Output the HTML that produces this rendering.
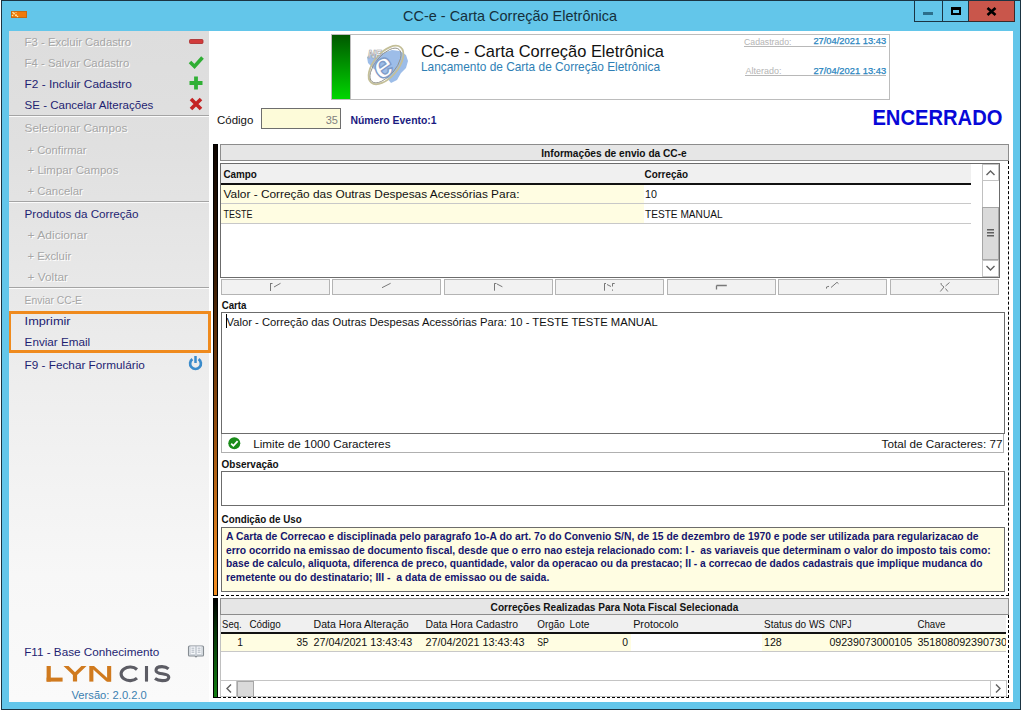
<!DOCTYPE html>
<html><head><meta charset="utf-8">
<style>
*{box-sizing:border-box;margin:0;padding:0}
html,body{width:1022px;height:710px;overflow:hidden;background:#fff;font-family:"Liberation Sans",sans-serif;position:relative}
.a{position:absolute}
.sep{position:absolute;left:9px;width:200px;height:2px;border-top:1px solid #a4a4a4;border-bottom:1px solid #fbfbfb}
.btn{position:absolute;top:279px;height:16px;width:109px;border:1px solid #b4b4b4;background:#f2f2f2}
.box{position:absolute;border:1px solid #6c6c6c;background:#fff}
</style></head><body>
<!-- window frame -->
<div class="a" style="left:1px;top:0;width:1020px;height:710px;background:#63c6ea;border:1px solid #1b3442"></div>
<!-- orange icon -->
<div class="a" style="left:11px;top:11px;width:16px;height:7px;background:#f07a0a;border:1px solid #c86a10"></div>
<svg class="a" style="left:11px;top:11px" width="9" height="7"><g fill="#ffe9a8"><circle cx="2" cy="1.5" r="0.8"/><circle cx="3" cy="2.5" r="0.9"/><circle cx="5" cy="4.2" r="1"/><circle cx="1.5" cy="4.5" r="0.8"/><circle cx="6.5" cy="5.5" r="0.8"/><circle cx="5" cy="1.5" r="0.6"/></g></svg>
<!-- window buttons -->
<div class="a" style="left:914px;top:1px;width:29px;height:21px;border:1px solid #1b3442;border-top:0;background:#63c6ea"></div>
<div class="a" style="left:923px;top:12px;width:10px;height:3px;background:#2b6f8c"></div>
<div class="a" style="left:943px;top:1px;width:26px;height:21px;border:1px solid #1b3442;border-top:0;border-left:0;background:#63c6ea"></div>
<div class="a" style="left:951px;top:7px;width:10px;height:8px;border:2px solid #000;border-top-width:3px"></div>
<div class="a" style="left:969px;top:1px;width:46px;height:21px;border:1px solid #3a2a2a;border-top:0;border-left:0;background:#c9564b"></div>
<svg class="a" style="left:986px;top:7px" width="11" height="9"><path d="M1.5 1 L9.5 8 M9.5 1 L1.5 8" stroke="#000" stroke-width="2.6"/></svg>

<!-- main white -->
<div class="a" style="left:209px;top:31px;width:804px;height:671px;background:#fff"></div>

<!-- header box -->
<div class="a" style="left:331px;top:34px;width:559px;height:66px;border:1px solid #bcbcbc;background:#fff"></div>
<div class="a" style="left:332px;top:35px;width:19px;height:64px;background:linear-gradient(#005800,#00d600);border-right:1px solid #bcbcbc"></div>
<svg class="a" style="left:360px;top:40px" width="56" height="50" viewBox="0 0 56 50">
  <path d="M7 17 C11 14 17 14 23 13 L32 10 L40 11 L46 15 L48 21 L46 28 L41 33 L37 40 L31 43 L27 38 L22 33 L14 29 L8 23 Z" fill="#9dbde8"/>
  <ellipse cx="26" cy="25" rx="23" ry="12" transform="rotate(-50 26 25)" fill="none" stroke="#c4bf98" stroke-width="1.8"/>
  <ellipse cx="25.5" cy="25.5" rx="21" ry="10" transform="rotate(-50 25.5 25.5)" fill="none" stroke="#909088" stroke-width="0.9"/>
  <g transform="rotate(-35 26 25)"><text x="13" y="35" font-family="Liberation Sans" font-size="34" font-style="italic" font-weight="bold" fill="#fdfdfd" stroke="#7f9cc8" stroke-width="1.4">e</text></g>
  <text x="8" y="17.5" font-family="Liberation Sans" font-size="10" font-style="italic" font-weight="bold" fill="#fff" stroke="#9a9a9a" stroke-width="0.6">NF</text>
</svg>
<div class="a" style="left:744px;top:46px;width:142px;height:1px;background:#b8b8b8"></div>
<div class="a" style="left:745px;top:75px;width:141px;height:1px;background:#b8b8b8"></div>

<!-- codigo -->
<div class="a" style="left:261px;top:108px;width:80px;height:21px;border:1px solid #6e6e6e;background:#fdfbd9"></div>

<!-- left bars -->
<div class="a" style="left:213px;top:144px;width:5px;height:452px;background:linear-gradient(#0c0400,#3a1c04 30%,#9a5210 65%,#f08c22 95%);border:1px solid #000"></div>
<div class="a" style="left:213px;top:598px;width:5px;height:100px;background:linear-gradient(#000,#063006 30%,#128012);border:1px solid #000"></div>

<!-- section 1 header -->
<div class="a" style="left:220px;top:144px;width:789px;height:17px;border:1px solid #8c8c8c;background:#e6e6e6"></div>

<!-- grid 1 -->
<div class="box" style="left:220px;top:163px;width:780px;height:115px"></div>
<div class="a" style="left:221px;top:164px;width:750px;height:21px;background:#f0f0f0;border-bottom:2px solid #111"></div>
<div class="a" style="left:221px;top:185px;width:423px;height:18px;background:#fffde2"></div>
<div class="a" style="left:221px;top:203px;width:750px;height:1px;background:#c8c8c8"></div>
<div class="a" style="left:221px;top:204px;width:423px;height:19px;background:#fffde2"></div>
<div class="a" style="left:221px;top:223px;width:750px;height:1px;background:#c8c8c8"></div>
<!-- vscroll -->
<div class="a" style="left:982px;top:164px;width:17px;height:113px;background:#fff;border-left:1px solid #c0c0c0"></div>
<div class="a" style="left:982px;top:164px;width:17px;height:17px;border:1px solid #c4c4c4;background:#fff"></div>
<div class="a" style="left:982px;top:207px;width:17px;height:53px;border:1px solid #a6a6a6;background:#dadada"></div>
<div class="a" style="left:982px;top:260px;width:17px;height:17px;border:1px solid #c4c4c4;background:#fff"></div>
<svg class="a" style="left:982px;top:164px" width="17" height="113">
 <path d="M4.5 11 L8.5 7 L12.5 11" fill="none" stroke="#606060" stroke-width="1.4"/>
 <path d="M4.5 102 L8.5 106 L12.5 102" fill="none" stroke="#606060" stroke-width="1.4"/>
 <rect x="5" y="65" width="7" height="1.5" fill="#606060"/><rect x="5" y="68" width="7" height="1.5" fill="#606060"/><rect x="5" y="71" width="7" height="1.5" fill="#606060"/>
</svg>
<!-- nav buttons -->
<div class="btn" style="left:221px"></div>
<div class="btn" style="left:332px"></div>
<div class="btn" style="left:444px"></div>
<div class="btn" style="left:555px"></div>
<div class="btn" style="left:667px"></div>
<div class="btn" style="left:778px"></div>
<div class="btn" style="left:890px"></div>
<svg class="a" style="left:221px;top:279px" width="778" height="16" fill="none" stroke="#787878" stroke-width="1">
 <path d="M49.5 4 V12 M49.5 4.5 H51.5 M53 8 L59.5 4.3"/>
 <path d="M161 8.7 L169.6 4.3"/>
 <path d="M273.5 4.3 V11.7 M273.5 4.5 H275.5 M276 5 L281.4 7.8"/>
 <path d="M383.5 4.3 V11.7 M383.5 4.5 H385 M386 5.5 L390 7.5 M391.5 4.3 V7.5 M391.5 4.5 H393.7 M391.5 10.5 V11.7"/>
 <path d="M495.5 6.5 H505.8 M495.5 6.5 V10.5" stroke-width="1.3"/>
 <path d="M605.5 9.6 V8 L608 7.3 M610 8.5 L616 3.3 L617.5 4.7"/>
 <path d="M720 4 Q719 5.5 723 8 L719.3 12.5 M728.5 3.5 L724.5 7 M724.5 9.5 L726.8 12.5"/>
</svg>

<!-- carta -->
<div class="box" style="left:221px;top:312px;width:784px;height:122px"></div>
<div class="a" style="left:226px;top:314px;width:1px;height:14px;background:#000;z-index:6"></div>
<div class="a" style="left:221px;top:434px;width:783px;height:19px;border:1px solid #b0b0b0;border-top:0;background:#fff"></div>
<svg class="a" style="left:228px;top:437px" width="13" height="13"><circle cx="6.3" cy="6.3" r="6" fill="#1a8c1a"/><path d="M3.2 6.6 L5.4 8.8 L9.6 4.2" fill="none" stroke="#fff" stroke-width="1.8"/></svg>

<!-- observacao -->
<div class="box" style="left:221px;top:471px;width:784px;height:35px"></div>
<div class="box" style="left:221px;top:527px;width:784px;height:65px;background:#fffde2"></div>

<!-- dashed focus -->
<div class="a" style="left:221px;top:595px;width:788px;height:0;border-top:1px dashed #000"></div>
<div class="a" style="left:1008px;top:161px;width:0;height:435px;border-left:1px dashed #000"></div>
<div class="a" style="left:1008px;top:615px;width:0;height:83px;border-left:1px dashed #000"></div>
<div class="a" style="left:218px;top:697px;width:791px;height:0;border-top:1px dashed #000"></div>

<!-- section 2 -->
<div class="a" style="left:220px;top:598px;width:789px;height:17px;border:1px solid #8c8c8c;background:#e6e6e6"></div>
<div class="a" style="left:220px;top:615px;width:787px;height:82px;border-left:1px solid #c0c0c0;background:#fff"></div>
<div class="a" style="left:221px;top:615px;width:785px;height:19px;background:#f0f0f0;border-bottom:2px solid #111"></div>
<div class="a" style="left:221px;top:634px;width:410px;height:17px;background:#fffde2"></div>
<div class="a" style="left:762px;top:634px;width:244px;height:17px;background:#fffde2"></div>
<div class="a" style="left:221px;top:651px;width:785px;height:1px;background:#c8c8c8"></div>
<!-- hscroll -->
<div class="a" style="left:220px;top:680px;width:787px;height:17px;border:1px solid #c4c4c4;background:#fff"></div>
<div class="a" style="left:237px;top:681px;width:17px;height:16px;border:1px solid #a6a6a6;background:#dadada"></div>
<div class="a" style="left:236px;top:681px;width:1px;height:16px;background:#c4c4c4"></div>
<div class="a" style="left:990px;top:681px;width:1px;height:16px;background:#c4c4c4"></div>
<svg class="a" style="left:220px;top:680px" width="787" height="17" fill="none" stroke="#606060" stroke-width="1.4">
 <path d="M11 4.5 L7 8.5 L11 12.5"/>
 <path d="M776 4.5 L780 8.5 L776 12.5"/>
</svg>

<!-- left panel -->
<div class="a" style="left:9px;top:31px;width:200px;height:671px;background:linear-gradient(#dddddd,#e0e0e0 17%,#eeeeee 53%,#f7f7f7 81%,#fafafa)"></div>
<div class="sep" style="top:115px"></div>
<div class="sep" style="top:201px"></div>
<div class="sep" style="top:287px"></div>
<div class="a" style="left:9px;top:311px;width:202px;height:42px;border:3px solid #ef8a1d;border-left-width:2px"></div>
<svg class="a" style="left:185px;top:35px" width="22" height="340">
 <rect x="4.5" y="4.5" width="13.5" height="4" rx="1" fill="#d23c3c" stroke="#a82a2a" stroke-width="0.8"/>
 <path d="M5 27 L9.5 31.5 L17.5 22.5" fill="none" stroke="#2fae34" stroke-width="3.6"/>
 <path d="M11 41.5 V54.5 M4.5 48 H17.5" fill="none" stroke="#31b036" stroke-width="3.8"/>
 <path d="M6 64 L16 74 M16 64 L6 74" fill="none" stroke="#c42424" stroke-width="3.6"/>
 <path d="M7.4 324.2 A5.4 5.4 0 1 0 13.6 324.2" fill="none" stroke="#3a8bcb" stroke-width="2.7"/>
 <path d="M10.5 321 V328" fill="none" stroke="#3a8bcb" stroke-width="2.5"/>
</svg>
<svg class="a" style="left:187px;top:643px" width="18" height="15">
 <path d="M1.5 4 Q1.5 3 2.5 3 H15.5 Q16.5 3 16.5 4 V12 Q16.5 13 15.5 13 H10 L9 14 L8 13 H2.5 Q1.5 13 1.5 12 Z" fill="#dfe5ea" stroke="#868c92" stroke-width="1.1"/>
 <path d="M3.2 3.2 H8.5 V11.6 H3.2 Z M9.5 3.2 H14.8 V11.6 H9.5 Z" fill="#f6f8fb" stroke="#b8c0c8" stroke-width="0.6"/>
 <path d="M4.5 5.2 H7.3 M4.5 7.2 H7.3 M4.5 9.2 H7.3 M10.7 5.2 H13.5 M10.7 7.2 H13.5 M10.7 9.2 H13.5" stroke="#9aa4ae" stroke-width="0.8"/>
</svg>
<svg class="a" style="left:0;top:0" width="209" height="710">
 <g fill="#d07a1e">
  <rect x="46.6" y="666" width="4.2" height="15.6"/><rect x="46.6" y="677.6" width="16" height="4"/>
  <polygon points="63.5,666 68.6,666 75,672.2 81.4,666 86.5,666 77.1,675 77.1,681.6 72.9,681.6 72.9,675"/>
  <rect x="89.3" y="666" width="4.1" height="15.6"/><rect x="107.1" y="666" width="4.1" height="15.6"/>
  <polygon points="89.3,666 94,666 111.2,681.6 106.5,681.6"/>
 </g>
 <g fill="none" stroke="#5c5c64" stroke-width="3.1">
  <path d="M137 669.5 A9 6.8 0 1 0 137 678.2"/>
  <path d="M146.5 666 V681.6"/>
  <path d="M168.5 668.8 C166.5 667 164 666.6 162 666.6 C158 666.6 156 668.2 156 670.4 C156 675.2 168.8 672.4 168.8 677.2 C168.8 679.6 166.4 680.6 162.2 680.6 C159.4 680.6 156.8 679.9 155 678.6"/>
 </g>
</svg>
<svg class="a" style="left:0;top:0;z-index:5" width="1022" height="710" font-family="Liberation Sans"><defs><clipPath id="clipchave"><rect x="915" y="630" width="91" height="20"/></clipPath></defs>
<text x="403" y="21" font-size="14.6" fill="#15303c" textLength="214" lengthAdjust="spacingAndGlyphs" xml:space="preserve">CC-e - Carta Correção Eletrônica</text>
<text x="25.6" y="47" font-size="11.0" fill="#ffffff" textLength="106.5" lengthAdjust="spacingAndGlyphs" xml:space="preserve">F3 - Excluir Cadastro</text>
<text x="24.6" y="46" font-size="11.0" fill="#a6a6a6" textLength="106.5" lengthAdjust="spacingAndGlyphs" xml:space="preserve">F3 - Excluir Cadastro</text>
<text x="25.6" y="68" font-size="11.0" fill="#ffffff" textLength="104.6" lengthAdjust="spacingAndGlyphs" xml:space="preserve">F4 - Salvar Cadastro</text>
<text x="24.6" y="67" font-size="11.0" fill="#a6a6a6" textLength="104.6" lengthAdjust="spacingAndGlyphs" xml:space="preserve">F4 - Salvar Cadastro</text>
<text x="24.6" y="88" font-size="11.0" fill="#1e1e72" textLength="107.3" lengthAdjust="spacingAndGlyphs" xml:space="preserve">F2 - Incluir Cadastro</text>
<text x="24.6" y="109" font-size="11.0" fill="#1e1e72" textLength="128.7" lengthAdjust="spacingAndGlyphs" xml:space="preserve">SE - Cancelar Alterações</text>
<text x="25.6" y="133" font-size="11.0" fill="#ffffff" textLength="102.8" lengthAdjust="spacingAndGlyphs" xml:space="preserve">Selecionar Campos</text>
<text x="24.6" y="132" font-size="11.0" fill="#a6a6a6" textLength="102.8" lengthAdjust="spacingAndGlyphs" xml:space="preserve">Selecionar Campos</text>
<text x="28.5" y="154.5" font-size="11.0" fill="#ffffff" textLength="59" lengthAdjust="spacingAndGlyphs" xml:space="preserve">+ Confirmar</text>
<text x="27.5" y="153.5" font-size="11.0" fill="#a6a6a6" textLength="59" lengthAdjust="spacingAndGlyphs" xml:space="preserve">+ Confirmar</text>
<text x="28.5" y="175.3" font-size="11.0" fill="#ffffff" textLength="91" lengthAdjust="spacingAndGlyphs" xml:space="preserve">+ Limpar Campos</text>
<text x="27.5" y="174.3" font-size="11.0" fill="#a6a6a6" textLength="91" lengthAdjust="spacingAndGlyphs" xml:space="preserve">+ Limpar Campos</text>
<text x="28.5" y="196.3" font-size="11.0" fill="#ffffff" textLength="55.4" lengthAdjust="spacingAndGlyphs" xml:space="preserve">+ Cancelar</text>
<text x="27.5" y="195.3" font-size="11.0" fill="#a6a6a6" textLength="55.4" lengthAdjust="spacingAndGlyphs" xml:space="preserve">+ Cancelar</text>
<text x="24.6" y="218.3" font-size="11.0" fill="#1e1e72" textLength="114" lengthAdjust="spacingAndGlyphs" xml:space="preserve">Produtos da Correção</text>
<text x="28.5" y="240" font-size="11.0" fill="#ffffff" textLength="60" lengthAdjust="spacingAndGlyphs" xml:space="preserve">+ Adicionar</text>
<text x="27.5" y="239" font-size="11.0" fill="#a6a6a6" textLength="60" lengthAdjust="spacingAndGlyphs" xml:space="preserve">+ Adicionar</text>
<text x="28.5" y="261.3" font-size="11.0" fill="#ffffff" textLength="43.7" lengthAdjust="spacingAndGlyphs" xml:space="preserve">+ Excluir</text>
<text x="27.5" y="260.3" font-size="11.0" fill="#a6a6a6" textLength="43.7" lengthAdjust="spacingAndGlyphs" xml:space="preserve">+ Excluir</text>
<text x="28.5" y="282" font-size="11.0" fill="#ffffff" textLength="40.5" lengthAdjust="spacingAndGlyphs" xml:space="preserve">+ Voltar</text>
<text x="27.5" y="281" font-size="11.0" fill="#a6a6a6" textLength="40.5" lengthAdjust="spacingAndGlyphs" xml:space="preserve">+ Voltar</text>
<text x="25.6" y="305" font-size="11.0" fill="#ffffff" textLength="57.4" lengthAdjust="spacingAndGlyphs" xml:space="preserve">Enviar CC-E</text>
<text x="24.6" y="304" font-size="11.0" fill="#a6a6a6" textLength="57.4" lengthAdjust="spacingAndGlyphs" xml:space="preserve">Enviar CC-E</text>
<text x="24.6" y="325.3" font-size="11.0" fill="#1e1e72" textLength="46" lengthAdjust="spacingAndGlyphs" xml:space="preserve">Imprimir</text>
<text x="24.6" y="346" font-size="11.0" fill="#1e1e72" textLength="65.6" lengthAdjust="spacingAndGlyphs" xml:space="preserve">Enviar Email</text>
<text x="24.6" y="369" font-size="11.0" fill="#1e1e72" textLength="120.2" lengthAdjust="spacingAndGlyphs" xml:space="preserve">F9 - Fechar Formulário</text>
<text x="24.2" y="656" font-size="11.0" fill="#1e1e72" textLength="135" lengthAdjust="spacingAndGlyphs" xml:space="preserve">F11 - Base Conhecimento</text>
<text x="71.5" y="698.8" font-size="10.8" fill="#3a80b0" textLength="75.3" lengthAdjust="spacingAndGlyphs" xml:space="preserve">Versão: 2.0.2.0</text>
<text x="421" y="57.2" font-size="16.2" fill="#111" textLength="243" lengthAdjust="spacingAndGlyphs" xml:space="preserve">CC-e - Carta Correção Eletrônica</text>
<text x="421" y="71.2" font-size="11.9" fill="#2f7fb5" textLength="239" lengthAdjust="spacingAndGlyphs" xml:space="preserve">Lançamento de Carta de Correção Eletrônica</text>
<text x="744.1" y="44.9" font-size="8.4" fill="#b4b4b4" textLength="47.3" lengthAdjust="spacingAndGlyphs" xml:space="preserve">Cadastrado:</text>
<text x="813.4" y="44.4" font-size="9.0" fill="#2a86bf" textLength="72.7" lengthAdjust="spacingAndGlyphs" stroke="#2a86bf" stroke-width="0.25" xml:space="preserve">27/04/2021 13:43</text>
<text x="745.6" y="73.9" font-size="8.4" fill="#b4b4b4" textLength="35.8" lengthAdjust="spacingAndGlyphs" xml:space="preserve">Alterado:</text>
<text x="813.4" y="73.8" font-size="9.0" fill="#2a86bf" textLength="72.7" lengthAdjust="spacingAndGlyphs" stroke="#2a86bf" stroke-width="0.25" xml:space="preserve">27/04/2021 13:43</text>
<text x="217" y="124.2" font-size="11.0" fill="#111" textLength="36.4" lengthAdjust="spacingAndGlyphs" xml:space="preserve">Código</text>
<text x="338" y="124" font-size="11.0" fill="#808080" text-anchor="end" xml:space="preserve">35</text>
<text x="350.4" y="124.2" font-size="10.9" fill="#1a1a80" font-weight="700" textLength="86.2" lengthAdjust="spacingAndGlyphs" xml:space="preserve">Número Evento:1</text>
<text x="872.4" y="124.8" font-size="22.6" fill="#0808d8" font-weight="700" textLength="130" lengthAdjust="spacingAndGlyphs" xml:space="preserve">ENCERRADO</text>
<text x="541.3" y="156.6" font-size="10.9" fill="#111" font-weight="700" textLength="145.4" lengthAdjust="spacingAndGlyphs" xml:space="preserve">Informações de envio da CC-e</text>
<text x="223.4" y="177.7" font-size="10.2" fill="#111" font-weight="700" textLength="33.5" lengthAdjust="spacingAndGlyphs" xml:space="preserve">Campo</text>
<text x="644.6" y="177.7" font-size="10.2" fill="#111" font-weight="700" textLength="43.4" lengthAdjust="spacingAndGlyphs" xml:space="preserve">Correção</text>
<text x="223.5" y="197.8" font-size="10.7" fill="#111" textLength="296" lengthAdjust="spacingAndGlyphs" xml:space="preserve">Valor - Correção das Outras Despesas Acessórias Para:</text>
<text x="645" y="197.8" font-size="10.7" fill="#111" xml:space="preserve">10</text>
<text x="223.6" y="217.8" font-size="10.7" fill="#111" textLength="28.8" lengthAdjust="spacingAndGlyphs" xml:space="preserve">TESTE</text>
<text x="645" y="217.8" font-size="10.7" fill="#111" textLength="77.6" lengthAdjust="spacingAndGlyphs" xml:space="preserve">TESTE MANUAL</text>
<text x="221.7" y="308.5" font-size="10.0" fill="#111" font-weight="700" textLength="24.8" lengthAdjust="spacingAndGlyphs" xml:space="preserve">Carta</text>
<text x="226.5" y="325.8" font-size="10.9" fill="#111" textLength="431.2" lengthAdjust="spacingAndGlyphs" xml:space="preserve">Valor - Correção das Outras Despesas Acessórias Para: 10 - TESTE TESTE MANUAL</text>
<text x="253.2" y="448" font-size="11.2" fill="#111" textLength="137.3" lengthAdjust="spacingAndGlyphs" xml:space="preserve">Limite de 1000 Caracteres</text>
<text x="881.6" y="447.6" font-size="11.2" fill="#111" textLength="120.8" lengthAdjust="spacingAndGlyphs" xml:space="preserve">Total de Caracteres: 77</text>
<text x="221.6" y="468.2" font-size="10.8" fill="#111" font-weight="700" textLength="57" lengthAdjust="spacingAndGlyphs" xml:space="preserve">Observação</text>
<text x="221.6" y="523" font-size="10.5" fill="#111" font-weight="700" textLength="80.1" lengthAdjust="spacingAndGlyphs" xml:space="preserve">Condição de Uso</text>
<text x="226" y="539.6" font-size="10.6" fill="#15156e" font-weight="700" textLength="752.6" lengthAdjust="spacingAndGlyphs" xml:space="preserve">A Carta de Correcao e disciplinada pelo paragrafo 1o-A do art. 7o do Convenio S/N, de 15 de dezembro de 1970 e pode ser utilizada para regularizacao de</text>
<text x="226" y="553.5" font-size="10.6" fill="#15156e" font-weight="700" textLength="764.7" lengthAdjust="spacingAndGlyphs" xml:space="preserve">erro ocorrido na emissao de documento fiscal, desde que o erro nao esteja relacionado com: I -  as variaveis que determinam o valor do imposto tais como:</text>
<text x="226" y="567.4" font-size="10.6" fill="#15156e" font-weight="700" textLength="756.4" lengthAdjust="spacingAndGlyphs" xml:space="preserve">base de calculo, aliquota, diferenca de preco, quantidade, valor da operacao ou da prestacao; II - a correcao de dados cadastrais que implique mudanca do</text>
<text x="226" y="581.3000000000001" font-size="10.6" fill="#15156e" font-weight="700" textLength="323.3" lengthAdjust="spacingAndGlyphs" xml:space="preserve">remetente ou do destinatario; III -  a data de emissao ou de saida.</text>
<text x="490.6" y="610.8" font-size="10.9" fill="#111" font-weight="700" textLength="247.8" lengthAdjust="spacingAndGlyphs" xml:space="preserve">Correções Realizadas Para Nota Fiscal Selecionada</text>
<text x="222.1" y="628.4" font-size="10.1" fill="#111" textLength="19.5" lengthAdjust="spacingAndGlyphs" xml:space="preserve">Seq.</text>
<text x="249.4" y="628.4" font-size="10.1" fill="#111" textLength="31.3" lengthAdjust="spacingAndGlyphs" xml:space="preserve">Código</text>
<text x="313.5" y="628.4" font-size="10.1" fill="#111" textLength="95.2" lengthAdjust="spacingAndGlyphs" xml:space="preserve">Data Hora Alteração</text>
<text x="425.4" y="628.4" font-size="10.1" fill="#111" textLength="92.6" lengthAdjust="spacingAndGlyphs" xml:space="preserve">Data Hora Cadastro</text>
<text x="537.3" y="628.4" font-size="10.1" fill="#111" textLength="27.4" lengthAdjust="spacingAndGlyphs" xml:space="preserve">Orgão</text>
<text x="569.6" y="628.4" font-size="10.1" fill="#111" textLength="19.8" lengthAdjust="spacingAndGlyphs" xml:space="preserve">Lote</text>
<text x="633.2" y="628.4" font-size="10.1" fill="#111" textLength="45.4" lengthAdjust="spacingAndGlyphs" xml:space="preserve">Protocolo</text>
<text x="764" y="628.4" font-size="10.1" fill="#111" textLength="61" lengthAdjust="spacingAndGlyphs" xml:space="preserve">Status do WS</text>
<text x="829.4" y="628.4" font-size="10.1" fill="#111" textLength="22" lengthAdjust="spacingAndGlyphs" xml:space="preserve">CNPJ</text>
<text x="917.4" y="628.4" font-size="10.1" fill="#111" textLength="28" lengthAdjust="spacingAndGlyphs" xml:space="preserve">Chave</text>
<text x="313.5" y="645.9" font-size="10.1" fill="#111" textLength="98.7" lengthAdjust="spacingAndGlyphs" xml:space="preserve">27/04/2021 13:43:43</text>
<text x="425.4" y="645.9" font-size="10.1" fill="#111" textLength="99" lengthAdjust="spacingAndGlyphs" xml:space="preserve">27/04/2021 13:43:43</text>
<text x="764" y="645.9" font-size="10.1" fill="#111" textLength="17.8" lengthAdjust="spacingAndGlyphs" xml:space="preserve">128</text>
<text x="829.4" y="645.9" font-size="10.1" fill="#111" textLength="82.7" lengthAdjust="spacingAndGlyphs" xml:space="preserve">09239073000105</text>
<text x="243" y="645.9" font-size="10.3" fill="#111" text-anchor="end" xml:space="preserve">1</text>
<text x="308" y="645.9" font-size="10.3" fill="#111" text-anchor="end" xml:space="preserve">35</text>
<text x="628" y="645.9" font-size="10.3" fill="#111" text-anchor="end" xml:space="preserve">0</text>
<text x="537.3" y="645.9" font-size="10.3" fill="#111" textLength="11.5" lengthAdjust="spacingAndGlyphs" xml:space="preserve">SP</text>
<text x="917.4" y="645.9" font-size="10.1" fill="#111" textLength="89.5" lengthAdjust="spacingAndGlyphs" clip-path="url(#clipchave)" xml:space="preserve">351808092390730</text>
</svg>
</body></html>
